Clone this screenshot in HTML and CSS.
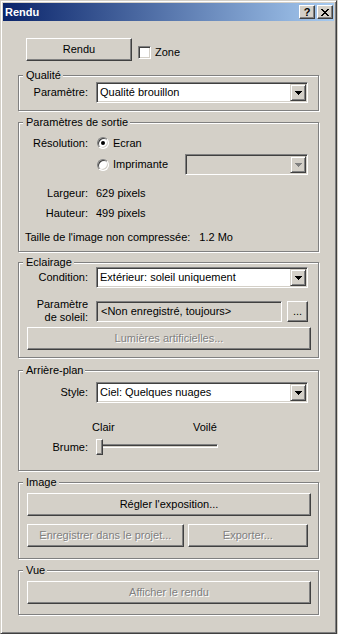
FILE: index.html
```html
<!DOCTYPE html>
<html>
<head>
<meta charset="utf-8">
<link rel="stylesheet" href="styles.css">
</head>
<body>
<div class="window">
  <div class="titlebar">
    <span class="title">Rendu</span>
    <div class="caption-btns">
      <span class="cbtn">?</span>
      <span class="cbtn">
        <svg width="8" height="7" viewBox="0 0 8 7" shape-rendering="crispEdges">
          <path d="M0 0h2v1H0zM6 0h2v1H6zM1 1h2v1H1zM5 1h2v1H5zM2 2h4v1H2zM3 3h2v1H3zM2 4h4v1H2zM1 5h2v1H1zM5 5h2v1H5zM0 6h2v1H0zM6 6h2v1H6z" fill="#000"/>
        </svg>
      </span>
    </div>
  </div>

  <div class="client">
    <div class="top-row">
      <button class="btn btn-render">Rendu</button>
      <label class="check"><span class="checkbox"></span>Zone</label>
    </div>

    <!-- Qualité -->
    <div class="group g-quality">
      <div class="group-title">Qualité</div>
      <div class="row r-quality">
        <span class="lbl">Paramètre:</span>
        <div class="combo ctl"><span class="combo-text">Qualité brouillon</span><span class="drop"><svg class="arrow" width="7" height="4" viewBox="0 0 7 4" shape-rendering="crispEdges"><path d="M0 0h7v1H0zM1 1h5v1H1zM2 2h3v1H2zM3 3h1v1H3z"/></svg></span></div>
      </div>
    </div>

    <!-- Paramètres de sortie -->
    <div class="group g-output">
      <div class="group-title">Paramètres de sortie</div>
      <div class="row r-res">
        <span class="lbl">Résolution:</span>
        <span class="radio on"></span><span class="radio-text">Ecran</span>
      </div>
      <div class="row r-printer">
        <span class="lbl"></span>
        <span class="radio"></span><span class="radio-text">Imprimante</span>
        <div class="combo combo-small disabled"><span class="combo-text"></span><span class="drop"><svg class="arrow" width="7" height="4" viewBox="0 0 7 4" shape-rendering="crispEdges"><path d="M0 0h7v1H0zM1 1h5v1H1zM2 2h3v1H2zM3 3h1v1H3z"/></svg></span></div>
      </div>
      <div class="row r-width">
        <span class="lbl">Largeur:</span><span class="ctl">629 pixels</span>
      </div>
      <div class="row r-height">
        <span class="lbl">Hauteur:</span><span class="ctl">499 pixels</span>
      </div>
      <div class="row r-size">
        <span>Taille de l'image non compressée:</span><span class="size-val">1.2 Mo</span>
      </div>
    </div>

    <!-- Eclairage -->
    <div class="group g-light">
      <div class="group-title">Eclairage</div>
      <div class="row r-cond">
        <span class="lbl">Condition:</span>
        <div class="combo ctl"><span class="combo-text">Extérieur: soleil uniquement</span><span class="drop"><svg class="arrow" width="7" height="4" viewBox="0 0 7 4" shape-rendering="crispEdges"><path d="M0 0h7v1H0zM1 1h5v1H1zM2 2h3v1H2zM3 3h1v1H3z"/></svg></span></div>
      </div>
      <div class="row r-sun">
        <span class="lbl">Paramètre<br>de soleil:</span>
        <div class="field ctl">&lt;Non enregistré, toujours&gt;</div>
        <button class="btn btn-dots">...</button>
      </div>
      <button class="btn btn-wide btn-lights disabled">Lumières artificielles...</button>
    </div>

    <!-- Arrière-plan -->
    <div class="group g-back">
      <div class="group-title">Arrière-plan</div>
      <div class="row r-style">
        <span class="lbl">Style:</span>
        <div class="combo ctl"><span class="combo-text">Ciel: Quelques nuages</span><span class="drop"><svg class="arrow" width="7" height="4" viewBox="0 0 7 4" shape-rendering="crispEdges"><path d="M0 0h7v1H0zM1 1h5v1H1zM2 2h3v1H2zM3 3h1v1H3z"/></svg></span></div>
      </div>
      <div class="row r-ends">
        <span class="end-clair">Clair</span><span>Voilé</span>
      </div>
      <div class="row r-haze">
        <span class="lbl">Brume:</span>
        <div class="slider ctl"><div class="track"></div><div class="thumb"></div></div>
      </div>
    </div>

    <!-- Image -->
    <div class="group g-image">
      <div class="group-title">Image</div>
      <button class="btn btn-wide btn-expo">Régler l'exposition...</button>
      <div class="row r-save">
        <button class="btn btn-save disabled">Enregistrer dans le projet...</button>
        <button class="btn btn-export disabled">Exporter...</button>
      </div>
    </div>

    <!-- Vue -->
    <div class="group g-view">
      <div class="group-title">Vue</div>
      <button class="btn btn-wide btn-show disabled">Afficher le rendu</button>
    </div>
  </div>
</div>
</body>
</html>
```

FILE: styles.css
```css
/* classic dialog look */
* { box-sizing: border-box; }
html, body { margin: 0; height: 100%; }
body { background: #d4d0c8; font: 11px/13px "Liberation Sans", Arial, sans-serif; color: #000; }

.window {
  width: 337px; height: 634px;
  background: #d4d0c8;
  border: 1px solid; border-color: #d4d0c8 #404040 #404040 #d4d0c8;
  box-shadow: inset 1px 1px #fff, inset -1px -1px #808080;
  padding: 2px;
  display: flex; flex-direction: column;
}

/* title bar */
.titlebar {
  height: 18px; flex: none;
  display: flex; align-items: center;
  padding: 0 1px 0 2px;
  background: linear-gradient(to right, #0a246a, #a6caf0);
}
.title { color: #fff; font-weight: bold; }
.caption-btns { margin-left: auto; display: flex; gap: 2px; }
.cbtn {
  width: 16px; height: 14px;
  display: flex; align-items: center; justify-content: center;
  background: #d4d0c8;
  border: 1px solid; border-color: #fff #404040 #404040 #fff;
  box-shadow: inset -1px -1px #808080;
  font-weight: bold; font-size: 11px; line-height: 12px;
}

.client { flex: 1; display: flex; flex-direction: column; }

/* buttons */
.btn {
  height: 23px; padding: 0; margin: 0;
  font: inherit; color: #000;
  background: #d4d0c8;
  border: 1px solid; border-color: #fff #404040 #404040 #fff;
  box-shadow: inset -1px -1px #808080;
}
.btn.disabled { color: #808080; text-shadow: 1px 1px #fff; }
.btn-wide { display: block; width: 284px; margin-left: 8px; }

.top-row { display: flex; align-items: flex-start; margin-top: 17px; padding-left: 23px; }
.btn-render { width: 106px; }
.check { display: flex; align-items: center; margin: 8px 0 0 6px; gap: 4px; }
.checkbox {
  width: 13px; height: 13px; background: #fff;
  border: 1px solid; border-color: #808080 #fff #fff #808080;
  box-shadow: inset 1px 1px #404040, inset -1px -1px #d4d0c8;
}

/* group boxes */
.group {
  width: 301px; margin-left: 15px;
  border: 1px solid #808080;
  box-shadow: inset 1px 1px #fff, 1px 1px #fff;
  flex: none;
}
.group-title {
  width: max-content; height: 13px;
  margin: -7px 0 -6px 4px; padding: 0 2px 0 3px;
  background: #d4d0c8;
}
.g-quality { margin-top: 14px; height: 36px; }
.g-output { margin-top: 11px; height: 130px; }
.g-light { margin-top: 10px; height: 96px; }
.g-back { margin-top: 12px; height: 101px; }
.g-image { margin-top: 11px; height: 77px; }
.g-view { margin-top: 11px; height: 45px; }

.row { display: flex; align-items: center; padding-right: 10px; }
.lbl { width: 69px; flex: none; text-align: right; }
.ctl { margin-left: 8px; }

/* combo boxes and fields */
.combo {
  width: 212px; height: 21px; flex: none;
  display: flex; align-items: center;
  padding: 1px;
  background: #fff;
  border: 1px solid; border-color: #808080 #fff #fff #808080;
  box-shadow: inset 1px 1px #404040, inset -1px -1px #d4d0c8;
}
.combo-text { margin-left: 2px; }
.drop {
  width: 16px; height: 17px; margin-left: auto;
  display: flex; align-items: center; justify-content: center;
  background: #d4d0c8;
  border: 1px solid; border-color: #d4d0c8 #404040 #404040 #d4d0c8;
  box-shadow: inset 1px 1px #fff, inset -1px -1px #808080;
}
.arrow { fill: #000; }
.combo.disabled { background: #d4d0c8; }
.combo.disabled .arrow { fill: #808080; }
.combo-small { width: 123px; margin-left: auto; }

.field {
  width: 186px; height: 21px; flex: none;
  display: flex; align-items: center;
  padding-left: 4px;
  background: #d4d0c8;
  border: 1px solid; border-color: #808080 #fff #fff #808080;
  box-shadow: inset 1px 1px #404040, inset -1px -1px #d4d0c8;
}

/* radios */
.radio {
  width: 12px; height: 12px; flex: none; margin-left: 9px;
  display: flex; align-items: center; justify-content: center;
  border-radius: 50%; background: #fff;
  border: 1px solid; border-color: #808080 #fff #fff #808080;
  box-shadow: inset 1px 1px #404040, inset -1px -1px #d4d0c8;
}
.radio.on::after { content: ""; width: 4px; height: 4px; border-radius: 50%; background: #000; }
.radio-text { margin-left: 4px; }

/* rows */
.r-quality { margin-top: 6px; }
.r-res { margin-top: 10px; height: 20px; }
.r-printer { margin-top: 1px; height: 21px; }
.r-width { margin-top: 12px; height: 13px; }
.r-height { margin-top: 7px; height: 13px; }
.r-size { margin-top: 11px; height: 13px; padding-left: 6px; }
.size-val { margin-left: 9px; }

.r-cond { margin-top: 4px; }
.r-sun { margin-top: 10px; height: 26px; }
.btn-dots { width: 24px; height: 21px; margin-left: 5px; line-height: 15px; }
.btn-lights { margin-top: 3px; }

.r-style { margin-top: 11px; }
.r-ends { margin-top: 18px; height: 13px; padding-left: 73px; }
.end-clair { width: 101px; }
.r-haze { margin-top: 5px; height: 16px; }

/* slider */
.slider { position: relative; width: 122px; height: 16px; }
.track {
  margin-top: 5px; height: 4px;
  border: 1px solid; border-color: #808080 #fff #fff #808080;
  box-shadow: inset 1px 1px #404040;
}
.thumb {
  position: absolute; left: 0; top: 0;
  width: 7px; height: 16px;
  background: #d4d0c8;
  border: 1px solid; border-color: #fff #404040 #404040 #fff;
  box-shadow: inset -1px -1px #808080;
}

.btn-expo { margin-top: 10px; }
.r-save { margin-top: 8px; padding-left: 8px; gap: 4px; }
.btn-save { width: 159px; }
.btn-export { width: 122px; }
.btn-show { margin-top: 10px; }
```
